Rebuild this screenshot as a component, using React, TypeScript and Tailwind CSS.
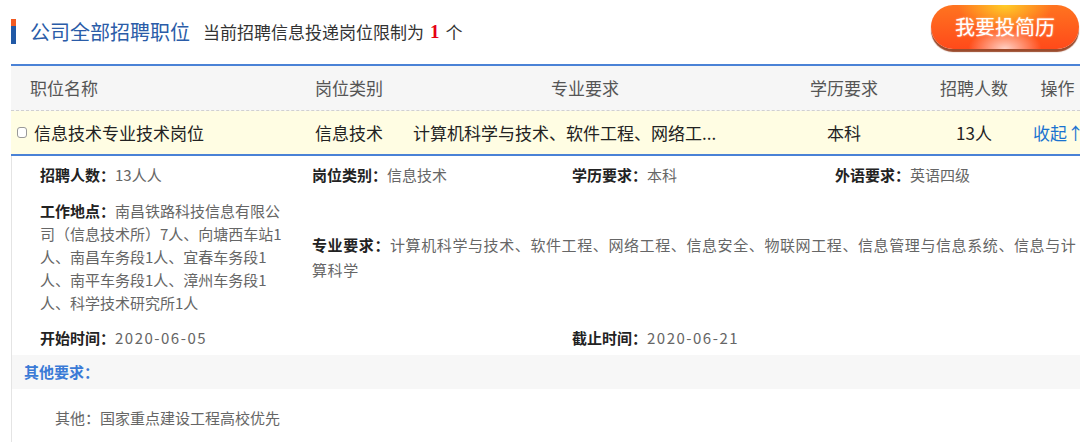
const fieldLabel = 'font-bold text-[#222]';
const fieldValue = 'text-[#666]';

function Field({ label, value, wide }: { label: string; value: string; wide?: boolean }) {
  return (
    <div className="leading-[23px]">
      <span className={fieldLabel}>{label}：</span>
      <span className={wide ? 'tracking-[1.5px] text-[#666]' : fieldValue}>{value}</span>
    </div>
  );
}

function ApplyButton() {
  return (
    <button className="ml-auto mr-[1px] mt-[5px] flex h-[44px] w-[148px] items-center justify-center rounded-full bg-[radial-gradient(ellipse_at_50%_0%,rgba(255,214,40,0.9),transparent_45%),radial-gradient(ellipse_at_50%_100%,rgba(255,255,255,0.75),transparent_35%),linear-gradient(180deg,#ff7420,#ff4a1a)] text-[20px] text-white shadow-[0_3px_1px_#9b4b2c] [text-shadow:0_0_2px_rgba(255,255,255,0.6)]">
      我要投简历
    </button>
  );
}

export default function App() {
  return (
    <div className="h-[442px] w-[1080px] overflow-hidden bg-white font-['Noto_Sans_CJK_SC',sans-serif]">
      {/* page title */}
      <div className="flex h-[64px]">
        <div className="ml-[11px] mt-[19px] flex h-[25px] items-center">
          <div className="flex h-[25px] w-[5px] flex-col">
            <div className="h-[7px] bg-[#f15a22]" />
            <div className="flex-1 bg-[#2159a6]" />
          </div>
          <h1 className="ml-[14px] text-[20px] leading-[25px] text-[#2a5ca8]">公司全部招聘职位</h1>
          <p className="ml-[13px] flex items-center text-[17px] leading-[25px] text-[#333]">
            当前招聘信息投递岗位限制为
            <span className="mx-[6px] font-['Liberation_Serif',serif] text-[19px] font-bold text-[#e60012]">1</span>
            个
          </p>
        </div>
        <ApplyButton />
      </div>

      {/* job table */}
      <div className="ml-[11px] w-[1079px]">
        <div className="grid h-[47px] grid-cols-[294px_100px_360px_158px_102px_65px] items-center border-t-2 border-b border-dashed border-[#4a82d6] border-b-[#d0d0d0] bg-[#f6f6f6] text-[17px] text-[#555] [border-top-style:solid]">
          <div className="pl-[19px]">职位名称</div>
          <div className="pl-[10px]">岗位类别</div>
          <div className="text-center">专业要求</div>
          <div className="text-center">学历要求</div>
          <div className="text-center">招聘人数</div>
          <div className="text-center">操作</div>
        </div>
        <div className="grid h-[45px] grid-cols-[294px_100px_360px_158px_102px_65px] items-center border-b-2 border-[#4a82d6] bg-[#fffde3] text-[17px] text-[#222]">
          <div className="flex items-center gap-[7px] pl-[6px]">
            <span className="h-[11px] w-[10px] rounded-[3px] border border-[#999] bg-white" />
            信息技术专业技术岗位
          </div>
          <div className="pl-[10px]">信息技术</div>
          <div className="whitespace-nowrap pl-[8px]">计算机科学与技术、软件工程、网络工...</div>
          <div className="text-center">本科</div>
          <div className="text-center">13人</div>
          <div className="whitespace-nowrap pl-[8px] text-[#1a73d0]">收起↑</div>
        </div>

        {/* expanded detail */}
        <div className="h-[286px] border-l border-[#e4e4e4] text-[15px]">
          <div className="pl-[28px] pt-[7px]">
            <div className="grid grid-cols-[272px_260px_263px_263px]">
              <Field label="招聘人数" value="13人人" />
              <Field label="岗位类别" value="信息技术" />
              <Field label="学历要求" value="本科" />
              <Field label="外语要求" value="英语四级" />
            </div>
            <div className="mt-[13px] grid grid-cols-[272px_auto] items-center">
              <div className="w-[250px] leading-[23px]">
                <span className={fieldLabel}>工作地点：</span>
                <span className={fieldValue}>
                  南昌铁路科技信息有限公司（信息技术所）7人、向塘西车站1人、南昌车务段1人、宜春车务段1人、南平车务段1人、漳州车务段1人、科学技术研究所1人
                </span>
              </div>
              <div className="w-[772px] leading-[25px] tracking-[0.6px]">
                <span className={fieldLabel}>专业要求：</span>
                <span className={fieldValue}>
                  计算机科学与技术、软件工程、网络工程、信息安全、物联网工程、信息管理与信息系统、信息与计算科学
                </span>
              </div>
            </div>
            <div className="mt-[12px] grid grid-cols-[272px_260px_263px_263px]">
              <Field label="开始时间" value="2020-06-05" wide />
              <div />
              <Field label="截止时间" value="2020-06-21" wide />
            </div>
          </div>
          <div className="mt-[6px] flex h-[34px] items-center bg-[#f7f7f7] pl-[12px] font-semibold text-[#3a7ad6]">
            其他要求：
          </div>
          <div className="mt-[17px] pl-[43px] leading-[23px] text-[#666]">其他：国家重点建设工程高校优先</div>
        </div>
      </div>
    </div>
  );
}
